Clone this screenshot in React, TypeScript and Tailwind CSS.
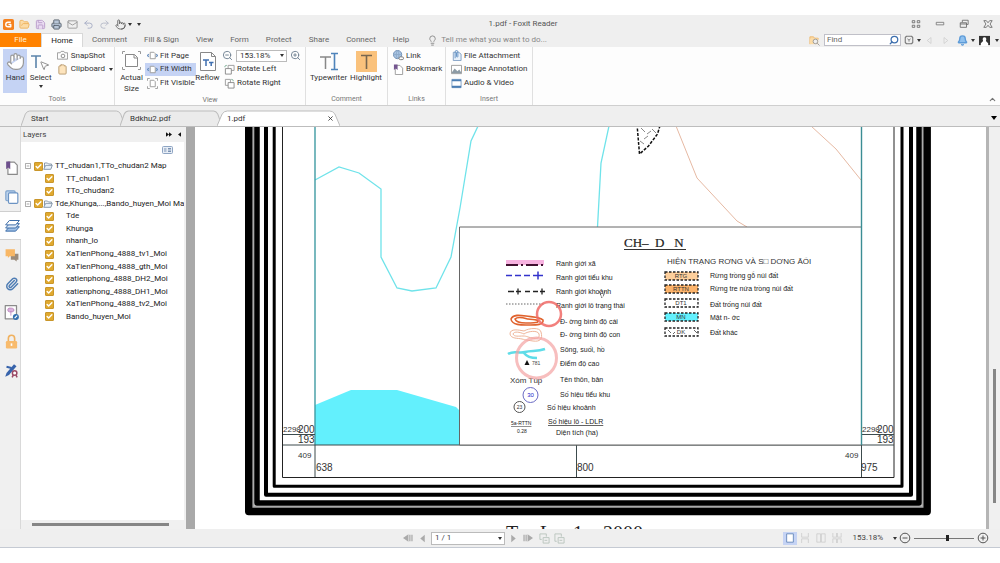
import type { ReactNode } from "react";
import { clsx } from "clsx";
import {
  Bell,
  Check,
  ChevronUp,
  Clipboard,
  FolderOpen,
  Hand,
  Lightbulb,
  Mail,
  MousePointer2,
  Paperclip,
  Pointer,
  Printer,
  Redo2,
  Save,
  Search,
  Undo2,
  ZoomIn,
  ZoomOut,
} from "lucide-react";

const menuTabs = ["Comment", "Fill & Sign", "View", "Form", "Protect", "Share", "Connect", "Help"];

const layers = [
  { name: "TT_chudan1,TTo_chudan2 Map", parent: true },
  { name: "TT_chudan1" },
  { name: "TTo_chudan2" },
  { name: "Tde,Khunga,...,Bando_huyen_Moi Map", parent: true },
  { name: "Tde" },
  { name: "Khunga" },
  { name: "nhanh_lo" },
  { name: "XaTienPhong_4888_tv1_Moi" },
  { name: "XaTienPhong_4888_gth_Moi" },
  { name: "xatienphong_4888_DH2_Moi" },
  { name: "xatienphong_4888_DH1_Moi" },
  { name: "XaTienPhong_4888_tv2_Moi" },
  { name: "Bando_huyen_Moi" },
];

function Caret({ className = "" }: { className?: string }) {
  return (
    <svg viewBox="0 0 4 3" className={clsx("h-[3px] w-1 shrink-0 fill-[#333]", className)}>
      <path d="M0 0h4L2 3z" />
    </svg>
  );
}

function Icon({ children, className = "size-3", box = "0 0 12 12" }: { children: ReactNode; className?: string; box?: string }) {
  return (
    <svg viewBox={box} fill="none" strokeLinejoin="round" className={clsx("shrink-0", className)}>
      {children}
    </svg>
  );
}

/* ---------- title bar ---------- */

function TitleBar() {
  return (
    <header className="flex h-[18px] items-center bg-[#efefef] pr-[7px] pl-[3px]">
      <div className="flex items-center gap-[5px]">
        <Icon className="size-[11px]">
          <rect width="12" height="12" rx="2" fill="#f58220" />
          <path d="M8.5 3.5h-3a2.5 2.5 0 0 0 0 5h3V6H6" stroke="#fff" strokeWidth="1.5" />
        </Icon>
        <button aria-label="Open"><FolderOpen className="size-[11px] fill-[#fbdba6] text-[#eeb25c]" /></button>
        <button aria-label="Save"><Save className="size-[11px] fill-[#eadcf2] text-[#b99bcb]" /></button>
        <button aria-label="Print"><Printer className="size-[11px] fill-[#b8c6d8] text-[#56606c]" /></button>
        <button aria-label="Mail"><Mail className="size-[11px] text-[#999]" /></button>
        <button aria-label="Undo"><Undo2 className="size-[11px] text-[#a5acc4]" /></button>
        <button aria-label="Redo"><Redo2 className="size-[11px] text-[#b6bac8]" /></button>
        <button aria-label="Touch mode" className="flex items-center gap-[2px]">
          <Pointer className="size-[11px] text-[#666]" />
          <Caret />
        </button>
        <button aria-label="Customize"><Caret /></button>
      </div>
      <h1 className="flex-1 pr-[6px] text-center text-[#555]">1.pdf - Foxit Reader</h1>
      <div className="flex items-center gap-[14px]">
        <button aria-label="Ribbon options">
          <Icon className="size-[10px]">
            <path d="M1.500 2h3v2.500h-3zM7.500 2h3v2.500h-3zM1.500 7.500h3V10h-3zM7.500 7.500h3V10h-3z" stroke="#666" />
          </Icon>
        </button>
        <button aria-label="Minimize">
          <Icon className="size-[10px]"><rect x="1.500" y="4" width="9" height="3" stroke="#777" /></Icon>
        </button>
        <button aria-label="Restore">
          <Icon className="size-[10px]">
            <path d="M4 4V1.500h7v5H9M1.500 4.500H9V10H1.500zM1.500 6H9" stroke="#666" />
          </Icon>
        </button>
        <button aria-label="Close">
          <Icon className="size-[10px]">
            <path d="M1 2h3l2 2.500L8 2h3L8.500 6l2.500 4H8L6 7.500 4 10H1l2.500-4z" stroke="#666" />
          </Icon>
        </button>
      </div>
    </header>
  );
}

function MenuBar() {
  return (
    <nav className="flex h-[14px] items-stretch bg-[#efefef] text-[#666]">
      <button className="w-[41px] bg-[#ff8200] text-[#fff1dc]">File</button>
      <button className="w-[42px] border border-b-0 border-[#d8d8d8] bg-white text-[#222]">Home</button>
      <div className="flex items-center gap-[17px] pl-[9px]">
        {menuTabs.map((tab) => (
          <button key={tab}>{tab}</button>
        ))}
      </div>
      <label className="ml-[18px] flex flex-1 items-center gap-[3px] text-[#888]">
        <Lightbulb className="size-[11px]" />
        <input className="w-[120px] placeholder:text-[#888]" placeholder="Tell me what you want to do..." />
      </label>
      <div className="flex items-center pr-px">
        <Icon className="mr-1 size-[11px]">
          <path d="M1 10V2h4l1 1.500h4V5" fill="#fbdba6" stroke="#eeb76c" />
          <path d="M1 4h9v6H1z" fill="#fbdba6" />
          <circle cx="7" cy="7" r="2.500" fill="#eee" stroke="#999" />
          <path d="m9 9 2.500 2.500" stroke="#999" />
        </Icon>
        <label className="flex h-3 w-[77px] items-center border border-[#c0c0c8] bg-white pr-px pl-[2px]">
          <input className="w-full min-w-0 placeholder:text-[#666]" placeholder="Find" aria-label="Find" />
          <Search className="size-[10px] shrink-0 -scale-x-100 text-[#3d6fae]" strokeWidth={3} />
        </label>
        <button aria-label="Search settings" className="ml-[3px] flex items-center gap-[3px]">
          <Icon className="size-[10px]">
            <path d="M3 1.500h6L10.500 3v6L9 10.500H3L1.500 9V3z" stroke="#777" strokeWidth="1.300" />
            <path d="M4 4.500 6 6l2-1.500M6 6v2" stroke="#777" />
          </Icon>
          <Caret />
        </button>
        <button aria-label="Previous" className="ml-1">
          <Icon className="size-[9px]"><path d="M8 2 3 6l5 4z" stroke="#ccc" /></Icon>
        </button>
        <button aria-label="Next" className="ml-[7px]">
          <Icon className="size-[9px]"><path d="m4 2 5 4-5 4z" stroke="#ccc" /></Icon>
        </button>
        <button aria-label="Notifications" className="ml-[7px] flex items-center gap-[3px]">
          <Bell className="size-[11px] fill-[#8fc1ef] text-[#5d9bd8]" strokeWidth={3} />
          <Caret />
        </button>
        <button aria-label="Account" className="ml-1 flex items-center gap-[5px]">
          <Icon className="size-[11px]">
            <path d="M0 1h12v10H0z" fill="#333" />
            <path d="M6 2.500c-2 0-2.500 2-1.500 4L2 9v3h8V9L7.500 6.500c1-2 .5-4-1.500-4z" fill="#fff" />
          </Icon>
          <Caret />
        </button>
      </div>
    </nav>
  );
}

/* ---------- ribbon ---------- */

function Group({ label, className, children }: { label: string; className: string; children: ReactNode }) {
  return (
    <section aria-label={label} className={clsx("flex shrink-0 flex-col border-r border-[#e0e0e0] pt-[2px]", className)}>
      <div className="flex flex-1">{children}</div>
      <p className="h-3 text-center text-[7px] leading-[12px] text-[#777]">{label}</p>
    </section>
  );
}

function BigButton({ icon, label, active, className, caret }: { icon: ReactNode; label: string; active?: boolean; className: string; caret?: boolean }) {
  return (
    <button className={clsx("flex flex-col items-center pt-[2px] leading-[12px]", active && "bg-[#c5d3f4]", className)}>
      <span className="flex h-[21px] items-center">{icon}</span>
      <span>{label}</span>
      {caret && <Caret className="mt-px" />}
    </button>
  );
}

function SmallButton({ icon, label, active, caret }: { icon: ReactNode; label: string; active?: boolean; caret?: boolean }) {
  return (
    <button className={clsx("flex items-center gap-[2px] px-px whitespace-nowrap", active && "bg-[#c5d3f4]")}>
      <span className="flex w-3 shrink-0 justify-center">{icon}</span>
      {label}
      {caret && <Caret className="ml-[2px]" />}
    </button>
  );
}

function FitIcon({ corners }: { corners?: boolean }) {
  return (
    <Icon className="size-[11px]">
      <path d="M3.500 2.500h4l1.500 1.500v5.500H3.500z" fill="#fff" stroke="#999" />
      {corners ? (
        <path d="M.5 3V.5H3M9 .5h2.500V3M.5 9v2.500H3M9 11.500h2.500V9" stroke="#999" />
      ) : (
        <path d="M2 4.500.5 6 2 7.500M10 4.500 11.500 6 10 7.500" stroke="#6c91bf" strokeWidth="1.200" />
      )}
    </Icon>
  );
}

function RotateIcon({ right }: { right?: boolean }) {
  return (
    <Icon className="size-[11px]">
      {right ? (
        <>
          <path d="M1.500 1.500H7V8H1.500z" stroke="#999" />
          <path d="M4.500 5H11v6H4.500z" fill="#fff" stroke="#888" />
          <path d="M8 1.500c1.500 0 2 .5 2 2" stroke="#6ca58a" />
        </>
      ) : (
        <>
          <path d="M4.500 1.500H11V7H4.500z" stroke="#999" />
          <path d="M1.500 5H8v6H1.500z" fill="#fff" stroke="#888" />
          <path d="M1 3.500c0-1.500.5-2 2-2" stroke="#6ca58a" />
        </>
      )}
    </Icon>
  );
}

function Ribbon() {
  return (
    <div className="flex h-[59px] overflow-hidden border-b border-[#cfcfcf] bg-[#fdfdfd] text-[#333]">
      <Group label="Tools" className="w-[115px]">
        <BigButton active className="ml-[3px] w-[26px]" label="Hand" icon={<Hand className="size-[19px] fill-white text-[#999]" strokeWidth={1.5} />} />
        <BigButton
          caret
          className="w-[28px]"
          label="Select"
          icon={
            <span className="flex items-center">
              <Icon className="h-4 w-[10px]" box="0 0 10 16">
                <path d="M0 2h10M5 2v12" stroke="#5b84ab" strokeWidth="1.600" />
              </Icon>
              <MousePointer2 className="mt-2 -ml-[2px] size-[11px] fill-white text-[#888]" />
            </span>
          }
        />
        <div className="ml-[2px] grid h-[41px] grid-rows-3">
          <SmallButton
            label="SnapShot"
            icon={
              <Icon className="size-[11px]">
                <path d="M.5 3h3l1-1.500h3L8.500 3h3v7H.5z" stroke="#999" />
                <circle cx="6.500" cy="6.500" r="2" stroke="#888" />
              </Icon>
            }
          />
          <SmallButton caret label="Clipboard" icon={<Clipboard className="size-[11px] fill-[#fde4bd] text-[#b89a70]" />} />
        </div>
      </Group>

      <Group label="View" className="w-[191px]">
        <button className="ml-1 flex w-[25px] flex-col items-center pt-[2px] leading-[11px]">
          <Icon className="mb-[2px] size-[19px]" box="0 0 19 19">
            <path d="M3.500 3.500h9l3 3v9h-12zM12 3.500V7h3.500" fill="#fff" stroke="#888" />
            <path d="M.5 3V.5H3M16 .5h2.500V3M.5 16v2.500H3M16 18.500h2.500V16" stroke="#999" />
          </Icon>
          Actual Size
        </button>
        <div className="ml-px grid h-[41px] w-[48px] grid-rows-3">
          <SmallButton label="Fit Page" icon={<FitIcon />} />
          <SmallButton active label="Fit Width" icon={<FitIcon />} />
          <SmallButton label="Fit Visible" icon={<FitIcon corners />} />
        </div>
        <BigButton
          className="w-[29px]"
          label="Reflow"
          icon={
            <Icon className="h-[19px] w-4" box="0 0 16 19">
              <path d="M.5.5h11l4 4v14H.5zM11.500.5v4h4" fill="#fff" stroke="#888" />
              <path d="M3 8h6M6 8v6M9 10.500h4.500M11.200 10.500V14" stroke="#3f6fb0" strokeWidth="1.500" />
            </Icon>
          }
        />
        <div className="grid h-[41px] grid-rows-3">
          <div className="flex items-center gap-[3px]">
            <button aria-label="Zoom out"><ZoomOut className="size-[11px] text-[#6d7f90]" /></button>
            <label className="flex h-3 w-[51px] items-center border border-[#bbb] bg-white pr-[2px] pl-[3px]">
              <select aria-label="Zoom level" className="w-full appearance-none"><option>153.18%</option></select>
              <Caret />
            </label>
            <button aria-label="Zoom in"><ZoomIn className="size-[11px] text-[#6d7f90]" /></button>
          </div>
          <SmallButton label="Rotate Left" icon={<RotateIcon />} />
          <SmallButton label="Rotate Right" icon={<RotateIcon right />} />
        </div>
      </Group>

      <Group label="Comment" className="w-[82px]">
        <BigButton
          className="ml-[3px] w-[39px]"
          label="Typewriter"
          icon={
            <Icon className="h-[19px] w-5" box="0 0 20 19">
              <path d="M1 5h11M6.500 5v12" stroke="#888" strokeWidth="1.500" />
              <path d="M12 1.500h7M12 17.500h7M15.500 1.500v16" stroke="#4f84bb" strokeWidth="1.600" />
            </Icon>
          }
        />
        <BigButton
          className="w-[36px]"
          label="Highlight"
          icon={
            <Icon className="size-[21px]" box="0 0 21 21">
              <path d="M0 0h21v21H0z" fill="#fac27c" />
              <path d="M5 4.500h11M10.500 4.500V18" stroke="#77664f" strokeWidth="1.600" />
            </Icon>
          }
        />
      </Group>

      <Group label="Links" className="w-[58px]">
        <div className="ml-[3px] grid h-[41px] grid-rows-3">
          <SmallButton
            label="Link"
            icon={
              <Icon className="size-[11px]">
                <circle cx="5" cy="5" r="4.500" fill="#a9c5e4" stroke="#6d8db3" />
                <path d="M.5 5h9M5 .5C3 3 3 7 5 9.500M5 .5C7 3 7 7 5 9.500" stroke="#8ba7c7" />
                <rect x="6.500" y="7.500" width="5" height="3" rx="1.500" fill="#fff" stroke="#777" />
              </Icon>
            }
          />
          <SmallButton
            label="Bookmark"
            icon={
              <Icon className="size-[11px]">
                <path d="M2.500 1.500h5l3 3v7h-8z" fill="#fff" stroke="#999" />
                <path d="M1 .5h4v6L3 5 1 6.500z" fill="#74558f" />
              </Icon>
            }
          />
        </div>
      </Group>

      <Group label="Insert" className="w-[87px]">
        <div className="ml-[3px] grid h-[41px] grid-rows-3">
          <SmallButton
            label="File Attachment"
            icon={
              <Icon className="size-[11px]">
                <path d="M2.500 2.500h6l2.500 2v7H2.500z" fill="#e9f1fa" stroke="#7f9fc4" />
                <path d="M4.500 9V2c0-2 3-2 3 0v5c0 1-1.500 1-1.500 0V3" stroke="#5d8dc2" />
              </Icon>
            }
          />
          <SmallButton
            label="Image Annotation"
            icon={
              <Icon className="size-[11px]">
                <path d="M.5 1.500h11v9H.5z" fill="#fff" stroke="#999" />
                <path d="m1 9 3-4 3 3 2-2 2 3v1H1z" fill="#8c9ba5" />
              </Icon>
            }
          />
          <SmallButton
            label="Audio & Video"
            icon={
              <Icon className="size-[11px]">
                <path d="M1 1.500h10v9H1z" fill="#fff" stroke="#7d9fc4" />
                <path d="M1 2.500h10M1 9.500h10" stroke="#4b7eb3" strokeWidth="2" />
              </Icon>
            }
          />
        </div>
      </Group>

      <div className="flex flex-1 items-end justify-end pr-[3px] pb-px">
        <button aria-label="Collapse ribbon"><ChevronUp className="size-[9px] text-[#777]" strokeWidth={3} /></button>
      </div>
    </div>
  );
}

/* ---------- document tabs ---------- */

function DocTab({ label, active, className }: { label: string; active?: boolean; className: string }) {
  return (
    <div className={clsx("grid h-4 shrink-0", className)}>
      <svg viewBox="0 0 120 16" preserveAspectRatio="none" className="col-start-1 row-start-1 h-4 w-full">
        <path
          d="M0 16 5 4q2-3 5-3h100q3 0 5 3l5 12"
          fill={active ? "#fff" : "#ebebeb"}
          stroke="#bdbdbd"
          vectorEffect="non-scaling-stroke"
        />
      </svg>
      <div className="z-10 col-start-1 row-start-1 flex items-center justify-between pt-px pr-[7px] pl-[10px]">
        <button>{label}</button>
        {active && (
          <button aria-label="Close tab">
            <Icon className="size-[5px]" box="0 0 6 6"><path d="m.5.5 5 5m0-5-5 5" stroke="#333" /></Icon>
          </button>
        )}
      </div>
    </div>
  );
}

function DocTabs() {
  return (
    <div className="flex h-[21px] items-end border-b border-[#bdbdbd] bg-[#efefef] pr-[3px] pl-[21px] text-[#333]">
      <DocTab label="Start" className="w-[104px]" />
      <DocTab label="Bdkhu2.pdf" className="-ml-[5px] w-[102px]" />
      <DocTab label="1.pdf" active className="-ml-[5px] w-[123px]" />
      <div className="flex flex-1 justify-end pb-[6px]">
        <button aria-label="Tab list">
          <svg viewBox="0 0 6 4" className="h-1 w-[6px]"><path d="M0 0h6L3 4z" /></svg>
        </button>
      </div>
    </div>
  );
}

/* ---------- side panels ---------- */

const railItems: { name: string; active?: boolean; icon: ReactNode }[] = [
  {
    name: "Bookmarks",
    icon: (
      <Icon className="size-[14px]">
        <path d="M2.500 1h5.500l2.500 2.500v8h-8z" fill="#fff" stroke="#8a8a8a" />
        <path d="M1 .5h3.500v6.500L2.700 5.500 1 7z" fill="#6d4f8c" />
      </Icon>
    ),
  },
  {
    name: "Pages",
    icon: (
      <Icon className="size-[14px]">
        <rect x=".7" y=".7" width="8" height="8.500" rx="1" fill="#bdd3ec" stroke="#7ea3cd" />
        <rect x="3" y="2.500" width="8" height="9" rx="1" fill="#fff" stroke="#6b93c3" />
      </Icon>
    ),
  },
  {
    name: "Layers",
    active: true,
    icon: (
      <Icon className="size-[15px]">
        <path d="M3.500 7h8L8.500 10.500H.5z" fill="#9fc0e6" stroke="#3e6ea9" strokeWidth=".8" />
        <path d="M3.500 4.500h8L8.500 8H.5z" fill="#dfeaf7" stroke="#3e6ea9" strokeWidth=".8" />
        <path d="M3.500 2h8L8.500 5.500H.5z" fill="#fff" stroke="#3e6ea9" strokeWidth=".8" />
      </Icon>
    ),
  },
  {
    name: "Comments",
    icon: (
      <Icon className="size-[14px]">
        <path d="M5 5h6.500v5H10v1.500L8 10H5z" fill="#9a8b7b" />
        <path d="M.5 1h8v6H4L2.500 8.500V7h-2z" fill="#f8b765" />
      </Icon>
    ),
  },
  { name: "Attachments", icon: <Paperclip className="size-[14px] text-[#4f7db4]" strokeWidth={2.5} /> },
  {
    name: "Signatures",
    icon: (
      <Icon className="size-[15px]">
        <path d="M1 .5h9v10.500H1z" fill="#fff" stroke="#8a8a8a" />
        <path d="M3 4c0-2 2-1.500 2.500-1.500S8 2.500 8 4 6.500 5.500 6 5.500 3 6 3 4zM5.500 5v3.500" fill="#d9b3dc" stroke="#b579b7" strokeWidth=".6" />
        <circle cx="9.500" cy="9.500" r="2.400" fill="#326fae" />
        <path d="m8.500 10.500 2-2" stroke="#fff" />
      </Icon>
    ),
  },
  {
    name: "Security",
    icon: (
      <Icon className="size-[15px]">
        <path d="M3.500 6V3.500a2.500 2.500 0 0 1 5 0V6" stroke="#f0b15f" strokeWidth="1.300" />
        <rect x="1.500" y="5.500" width="9" height="6" rx="1" fill="#f8bb6d" />
        <path d="M6 7.500v2" stroke="#fff" strokeWidth="1.300" />
      </Icon>
    ),
  },
  {
    name: "Digital signatures",
    icon: (
      <Icon className="size-[15px]">
        <path d="m1 11 1-3 6-7 2 1.500-6 7z" fill="#3763ab" />
        <path d="m2 3 4 1" stroke="#3763ab" strokeWidth="1.500" />
        <circle cx="8.500" cy="8" r="1.800" fill="#fff" stroke="#9b4a66" strokeWidth="1.200" />
        <path d="m7.500 9.500-1 2M9.500 9.500l1 2" stroke="#9b4a66" strokeWidth="1.200" />
      </Icon>
    ),
  },
];

function Rail() {
  return (
    <div className="flex w-[21px] shrink-0 flex-col border-r border-[#d9d9d9] bg-[#f0f0f0] pt-[26px]">
      {railItems.map(({ name, icon, active }) => (
        <button
          key={name}
          aria-label={name}
          className={clsx("flex h-[29px] shrink-0 items-center justify-center pl-[3px]", active && "-mr-px border-y border-[#cfcfcf] bg-white")}
        >
          {icon}
        </button>
      ))}
    </div>
  );
}

function LayerRow({ name, parent }: { name: string; parent?: boolean }) {
  return (
    <li className={clsx("flex min-h-0 items-center whitespace-nowrap", parent ? "pl-1" : "pl-6")}>
      {parent && (
        <button aria-label="Collapse" className="mr-[3px]">
          <Icon className="size-[6px]" box="0 0 7 7"><path d="M.5.5h6v6h-6zM2 3.500h3" stroke="#999" /></Icon>
        </button>
      )}
      <label className="flex items-center">
        <span className="grid size-[9px] place-items-center">
          <input type="checkbox" defaultChecked className="col-start-1 row-start-1 size-[9px] appearance-none rounded-[1px] border border-[#c9962b] bg-[#e0a92f]" />
          <Check className="pointer-events-none col-start-1 row-start-1 size-[7px] text-white" strokeWidth={5} />
        </span>
        {parent && (
          <Icon className="h-[8px] w-[10px]" box="0 0 10 8">
            <path d="M1.500 7V1h3l1 1h3v2" stroke="#8899ab" />
            <path d="m.7 7.300 2-4h6.600l-1.500 4z" fill="#e8f0f8" stroke="#8899ab" />
          </Icon>
        )}
        <span className={parent ? "ml-[2px]" : "ml-[12px]"}>{name}</span>
      </label>
    </li>
  );
}

function LayersPanel() {
  return (
    <aside className="flex w-[163px] shrink-0 flex-col">
      <div className="flex h-[15px] items-center pr-[3px] pl-[2px] text-[#444]">
        <h2 className="flex-1">Layers</h2>
        <button aria-label="Expand panel" className="mr-[6px]">
          <Icon className="h-[5px] w-[6px]" box="0 0 8 6"><path d="m0 0 4 3-4 3zM4 0l4 3-4 3z" fill="#111" /></Icon>
        </button>
        <button aria-label="Hide panel">
          <Icon className="h-[5px] w-[3px]" box="0 0 4 6"><path d="M4 0 0 3l4 3z" fill="#111" /></Icon>
        </button>
      </div>
      <div className="flex min-h-0 flex-1 flex-col overflow-hidden bg-white">
        <button aria-label="Layer options" className="mt-1 mr-[11px] self-end">
          <Icon className="h-2 w-[11px]" box="0 0 11 8">
            <rect x=".5" y=".5" width="10" height="7" rx="1" fill="#e8eef6" stroke="#8ea5c3" />
            <path d="M2 3h2.500M2 5h2.500M6 2.500h3M6 4h3M6 5.500h3" stroke="#7a92b3" />
          </Icon>
        </button>
        <ul className="mt-[6px] grid h-[163px] shrink-0 auto-rows-fr text-[#222]">
          {layers.map((layer) => (
            <LayerRow key={layer.name} {...layer} />
          ))}
        </ul>
      </div>
      <div className="flex h-[9px] items-center bg-[#f0f0f0] pr-[15px] pl-[11px]">
        <div className="h-[3px] flex-1 bg-[#868686]" />
      </div>
    </aside>
  );
}

/* ---------- map page ---------- */

const legendTexts: [number, number, string][] = [
  [556, 266, "Ranh giới xã"],
  [556, 280, "Ranh giới tiểu khu"],
  [556, 294, "Ranh giới khoảnh"],
  [556, 308, "Ranh giới lô trạng thái"],
  [560, 324, "Đ- ờng bình độ cái"],
  [560, 337, "Đ- ờng bình độ con"],
  [560, 352, "Sông, suối, hồ"],
  [560, 366, "Điểm độ cao"],
  [560, 382, "Tên thôn, bản"],
  [560, 397, "Số hiệu tiểu khu"],
  [547, 410, "Số hiệu khoảnh"],
  [556, 435, "Diện tích (ha)"],
  [710, 278, "Rừng trồng gỗ núi đất"],
  [710, 291, "Rừng tre nứa trồng núi đất"],
  [710, 307, "Đất trống núi đất"],
  [710, 320, "Mặt n- ớc"],
  [710, 335, "Đất khác"],
];

const landUse = [
  { y: 272, code: "RTG", fill: "#fdcf9c" },
  { y: 285, code: "RTTN", fill: "#fbb36b" },
  { y: 299, code: "DT1", fill: "#fff" },
  { y: 313, code: "MN", fill: "#63f0fd" },
  { y: 328, code: "DK", fill: "#fff" },
];

const gridLabels: [number, number, string][] = [
  [298, 433, "200"],
  [298, 443, "193"],
  [316, 471, "638"],
  [577, 471, "800"],
  [861, 471, "975"],
  [877, 433, "200"],
  [877, 443, "193"],
];

function MapPage() {
  return (
    <svg viewBox="195 127 791 402" preserveAspectRatio="xMidYMin slice" fill="none" className="h-full w-full [font-family:'Liberation_Sans',Arial,sans-serif]">
      {/* sheet border */}
      <g stroke="#000" strokeLinejoin="round">
        <path d="M253 100v407h670V100" stroke="#aaa" strokeWidth="3" />
        <path d="M248.700 100v411.500h678.500V100" strokeWidth="7.400" />
        <path d="M257 100v403h662V100" strokeWidth="5.500" />
        <path d="M266 100v394.800h645V100" strokeWidth="4" />
        <path d="M274.200 100v386.300H902V100" strokeWidth="3" />
        <path d="M282.500 100v377.500h611.500V100" stroke="#222" />
      </g>
      {/* rivers, lake, contours */}
      <path d="M315 405 351 390h46l59 17 4 4v34H315z" fill="#63f0fd" />
      <g stroke="#6fe3ea" strokeWidth="1.300">
        <path d="m315 180 24-13 20 6 22 16v68l16 31 15 3 24-3 15-31 9-49 11-67 8-17" />
        <path d="m609 126-8 37-3.500 64" />
      </g>
      <path d="m676 126 21 52 40 43 10 6M811 126l25 23 25 31" stroke="#e6b9a3" />
      <path d="m637 124 2.500 30 9-8 9-12 3-10" stroke="#111" strokeWidth="1.500" strokeDasharray="3 1.500" />
      <path d="m641 128 4 4M648 136l-4 3M652 129l4 4M640 141l4 3M647 134l4-3" stroke="#888" />
      {/* neat line and grid */}
      <path d="M315 126v319" stroke="#3f9ba3" strokeWidth="1.400" />
      <path d="M283 445h611M283 434.500h32M861 434.500h33M315 445v32M576.500 445v32M861.500 445v32" stroke="#3c4b4d" />
      <path d="M459.500 227h402v218h-402z" fill="#fff" stroke="#666" />
      <path d="M861.500 126v319" stroke="#3b8d94" strokeWidth="1.400" />
      <g fontSize="10" fill="#333">
        {gridLabels.map(([x, y, label]) => (
          <text key={`${label}-${x}`} x={x} y={y}>{label}</text>
        ))}
      </g>
      <g fontSize="8" fill="#333">
        <text x="283" y="432">2298</text>
        <text x="862" y="432">2298</text>
        <text x="298" y="458">409</text>
        <text x="845" y="458">409</text>
      </g>

      {/* legend */}
      <text x="624" y="247" fontSize="13" fill="#222" stroke="#222" strokeWidth=".2" xmlSpace="preserve" className="[font-family:'Liberation_Serif',serif]">
        {"CH–\u00a0\u00a0D\u00a0\u00a0\u00a0N"}
      </text>
      <path d="M624 249.500h62" stroke="#333" />
      <text x="667" y="264" fontSize="8" fill="#333">HIỆN TRẠNG RƠNG VÀ S□ DƠNG ĀỔI</text>
      <g fontSize="7" fill="#222">
        {legendTexts.map(([x, y, label]) => (
          <text key={label} x={x} y={y}>{label}</text>
        ))}
        <text x="548" y="424" textDecoration="underline">Số hiệu lô - LDLR</text>
      </g>
      <path d="M506 262.500h38" stroke="#f7b2e0" strokeWidth="5" />
      <path d="M506 265h12m3 0h2m3 0h12m3 0h2" stroke="#401030" strokeWidth="2" />
      <path d="M506 275.500h6m3 0h6m3 0h6m3 0h10M538 271.500v8" stroke="#3333cc" strokeWidth="1.500" />
      <path d="M508 291.500h6m2 0h5m4 0h5m3 0h5m2 0h5M518 288.500v6M542 288.500v6" stroke="#222" strokeWidth="1.300" />
      <path d="M506 304h38" stroke="#666" strokeDasharray="1.500 1.500" />
      <g stroke="#e0622d" strokeWidth="1.600">
        <path d="M511 319c2-5 9-4 15-3s14 1 17 4c1 5-7 5-13 5s-18 1-19-6z" />
        <path d="M515 319c3-3 9-1 13 0s9 0 10 2-8 2-12 2-10-1-11-4z" />
      </g>
      <g stroke="#efb599">
        <path d="M510 334c0-6 9-4 14-3 5-3 16-4 17 1 2 7-1 10-8 9s-7-1-11-2-11 0-12-5z" />
        <path d="M513 334c1-3 7-2 11 0 4-3 14-4 15 0s-2 5-7 4-5-2-9-2-9 1-10-2z" />
      </g>
      <path d="M508 354c6-4 11 0 17-2s12 0 20-3M524 353c3 4 8 5 13 5" stroke="#5fdce8" strokeWidth="2.500" />
      <path d="m524.500 365 2.500-5 2.500 5z" fill="#111" />
      <text x="532" y="365" fontSize="5" fill="#444">781</text>
      <text x="510" y="383" fontSize="8" fill="#333">Xóm Túp</text>
      <circle cx="530.500" cy="395" r="7.500" stroke="#6a6ac4" />
      <text x="530.500" y="397" fontSize="6" fill="#2222cc" textAnchor="middle">30</text>
      <circle cx="519.500" cy="407" r="5.500" stroke="#555" />
      <text x="519.500" y="409" fontSize="5" fill="#333" textAnchor="middle">23</text>
      <text x="511" y="425" fontSize="5" fill="#222" textDecoration="underline">5a-RTTN</text>
      <text x="517" y="433" fontSize="5" fill="#222">0.28</text>
      {landUse.map(({ y, code, fill }) => (
        <g key={code}>
          <rect x="665" y={y} width="33" height="8" fill={fill} stroke="#222" strokeWidth="1.300" strokeDasharray="2.500 1.500" />
          <text x="681" y={y + 6} fontSize="6" fill="#333" textAnchor="middle">{code}</text>
        </g>
      ))}
      <path d="m668 330 3 3M694 330l3 3M673 334l2-2" stroke="#666" />

      {/* click ripples and pointer */}
      <circle cx="549" cy="314" r="12" stroke="#f06a66" strokeOpacity=".85" strokeWidth="2.500" />
      <circle cx="536.500" cy="358" r="20" stroke="#f3a3a3" strokeOpacity=".7" strokeWidth="3" />
      <path d="m599 291 3 7M605 291l-2 6" stroke="#555" strokeDasharray="2 1" />

      <text y="540" fontSize="20" fill="#222" className="[font-family:'Liberation_Serif',serif]">
        <tspan x="506">Ty</tspan> <tspan x="540">Le</tspan> <tspan x="573">1</tspan> <tspan x="603">2000</tspan>
      </text>
    </svg>
  );
}

/* ---------- status bar ---------- */

function StatusBar() {
  return (
    <footer className="grid h-[19px] grid-cols-[1fr_auto_1fr] items-center border-b border-[#c5cad3] bg-[#efefef] text-[#444]">
      <span />
      <div className="mr-[32px] flex items-center">
        <button aria-label="First page">
          <Icon className="size-[10px]"><path d="M6.500 1.500v9L0 6zM7.500 2H9v8H7.500zM10 2h1.500v8H10z" fill="#aaa" /></Icon>
        </button>
        <button aria-label="Previous page" className="ml-[5px]">
          <Icon className="size-[9px]"><path d="M9 1v10L3 6z" fill="#aaa" /></Icon>
        </button>
        <label className="ml-1 flex h-[13px] w-[74px] items-center border border-[#bbb] bg-white pr-[2px] pl-[3px]">
          <select aria-label="Page" className="w-full appearance-none"><option>1 / 1</option></select>
          <Caret />
        </label>
        <button aria-label="Next page" className="ml-1">
          <Icon className="size-[9px]"><path d="M3 1v10l6-5z" fill="#aaa" /></Icon>
        </button>
        <button aria-label="Last page" className="ml-[5px]">
          <Icon className="size-[10px]"><path d="M5.500 1.500v9L12 6zM.5 2H2v8H.5zM3 2h1.500v8H3z" fill="#aaa" /></Icon>
        </button>
        <button aria-label="Previous view" className="ml-[6px]">
          <Icon className="size-[11px]"><path d="M1 1h7v3M1 1v6h2M4.500 5H11v6H4.500zM6 8h3" stroke="#b9c4bd" /></Icon>
        </button>
        <button aria-label="Next view" className="ml-1">
          <Icon className="size-[11px]"><path d="M1 1h7v3M1 1v8h2M4.500 5H11v6H4.500zM6 8h3" stroke="#b9c4bd" /></Icon>
        </button>
      </div>
      <div className="flex items-center justify-end pr-[11px]">
        <button aria-label="Single page" className="flex h-[13px] w-[14px] items-center justify-center bg-[#c5d3f4]">
          <Icon className="size-[10px]"><path d="M2 1h8v10H2z" fill="#fff" stroke="#5b7fb5" /></Icon>
        </button>
        <button aria-label="Continuous" className="ml-[3px]">
          <Icon className="size-[10px]"><path d="M2 0v5h8V0M2 12V7h8v5" stroke="#ccc" /></Icon>
        </button>
        <button aria-label="Facing" className="ml-[6px]">
          <Icon className="size-[10px]"><path d="M1 1h4.500v10H1zM6.500 1H11v10H6.500z" stroke="#ccc" /></Icon>
        </button>
        <button aria-label="Continuous facing" className="ml-[6px]">
          <Icon className="size-[10px]"><path d="M1 0v5h4.500V0M6.500 0v5H11V0M1 12V7h4.500v5M6.500 12V7H11v5" stroke="#ccc" /></Icon>
        </button>
        <button className="ml-[11px] flex items-center gap-[10px]">153.18% <Caret /></button>
        <button aria-label="Zoom out" className="ml-[2px]">
          <Icon><circle cx="6" cy="6" r="4.800" stroke="#555" /><path d="M3.500 6h5" stroke="#555" /></Icon>
        </button>
        <input
          type="range"
          aria-label="Zoom"
          defaultValue={57}
          className="mx-[3px] h-px w-[60px] appearance-none bg-[#777] [&::-webkit-slider-thumb]:h-[6px] [&::-webkit-slider-thumb]:w-[3px] [&::-webkit-slider-thumb]:appearance-none [&::-webkit-slider-thumb]:bg-[#222]"
        />
        <button aria-label="Zoom in">
          <Icon><circle cx="6" cy="6" r="4.800" stroke="#555" /><path d="M3.500 6h5M6 3.500v5" stroke="#555" /></Icon>
        </button>
      </div>
    </footer>
  );
}

export default function App() {
  return (
    <div className="flex h-screen flex-col bg-white py-[15px] text-[8px] leading-[10px] [font-family:Roboto,'Noto_Sans',sans-serif]">
      <TitleBar />
      <MenuBar />
      <Ribbon />
      <DocTabs />
      <main className="flex min-h-0 flex-1 bg-[#f0f0f0]">
        <Rail />
        <LayersPanel />
        <div className="ml-[2px] w-[9px] shrink-0 bg-[#a9a9a9]" />
        <div className="min-w-0 flex-1 overflow-hidden bg-white">
          <MapPage />
        </div>
        <div className="w-[3px] shrink-0 bg-[#b5b5b5]" />
        <div className="flex w-[11px] shrink-0 flex-col items-center">
          <div className="flex-[242]" />
          <div className="w-[3px] flex-[134] bg-[#868686]" />
          <div className="flex-[26]" />
        </div>
      </main>
      <StatusBar />
    </div>
  );
}
